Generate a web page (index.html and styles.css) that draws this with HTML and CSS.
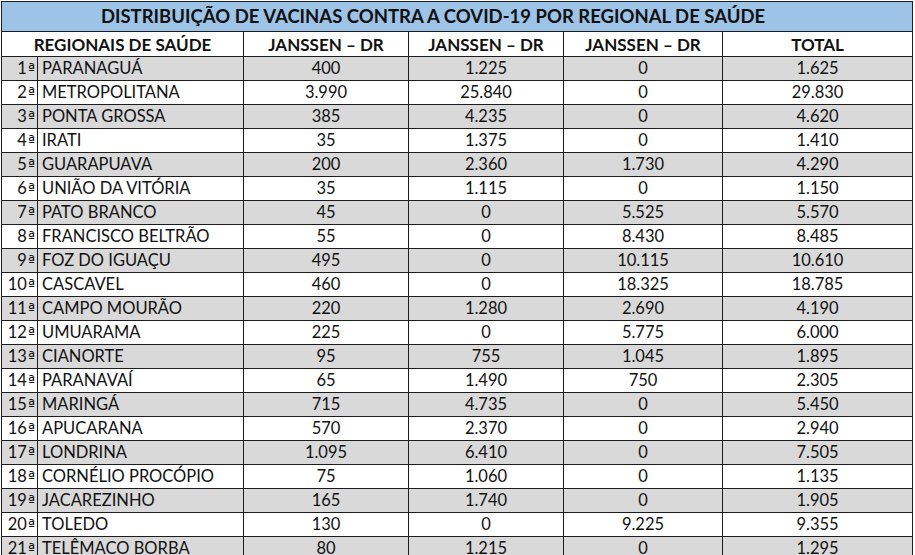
FILE: index.html
```html
<!DOCTYPE html>
<html lang="pt-BR">
<head>
<meta charset="utf-8">
<title>Distribuição de vacinas</title>
<link rel="stylesheet" href="styles.css">
</head>
<body>
<div class="wrap">
<table class="sheet">
<colgroup>
<col class="c-ord"><col class="c-name"><col class="c-j1"><col class="c-j2"><col class="c-j3"><col class="c-tot">
</colgroup>
<thead>
<tr class="title"><th colspan="6">DISTRIBUIÇÃO DE VACINAS CONTRA A COVID-19 POR REGIONAL DE SAÚDE</th></tr>
<tr class="head"><th colspan="2">REGIONAIS DE SAÚDE</th><th>JANSSEN – DR</th><th>JANSSEN – DR</th><th>JANSSEN – DR</th><th>TOTAL</th></tr>
</thead>
<tbody>
<tr class="odd"><td class="ord">1<span class="o">ª</span></td><td class="name">PARANAGUÁ</td><td>400</td><td>1.225</td><td>0</td><td>1.625</td></tr>
<tr><td class="ord">2<span class="o">ª</span></td><td class="name">METROPOLITANA</td><td>3.990</td><td>25.840</td><td>0</td><td>29.830</td></tr>
<tr class="odd"><td class="ord">3<span class="o">ª</span></td><td class="name">PONTA GROSSA</td><td>385</td><td>4.235</td><td>0</td><td>4.620</td></tr>
<tr><td class="ord">4<span class="o">ª</span></td><td class="name">IRATI</td><td>35</td><td>1.375</td><td>0</td><td>1.410</td></tr>
<tr class="odd"><td class="ord">5<span class="o">ª</span></td><td class="name">GUARAPUAVA</td><td>200</td><td>2.360</td><td>1.730</td><td>4.290</td></tr>
<tr><td class="ord">6<span class="o">ª</span></td><td class="name">UNIÃO DA VITÓRIA</td><td>35</td><td>1.115</td><td>0</td><td>1.150</td></tr>
<tr class="odd"><td class="ord">7<span class="o">ª</span></td><td class="name">PATO BRANCO</td><td>45</td><td>0</td><td>5.525</td><td>5.570</td></tr>
<tr><td class="ord">8<span class="o">ª</span></td><td class="name">FRANCISCO BELTRÃO</td><td>55</td><td>0</td><td>8.430</td><td>8.485</td></tr>
<tr class="odd"><td class="ord">9<span class="o">ª</span></td><td class="name">FOZ DO IGUAÇU</td><td>495</td><td>0</td><td>10.115</td><td>10.610</td></tr>
<tr><td class="ord">10<span class="o">ª</span></td><td class="name">CASCAVEL</td><td>460</td><td>0</td><td>18.325</td><td>18.785</td></tr>
<tr class="odd"><td class="ord">11<span class="o">ª</span></td><td class="name">CAMPO MOURÃO</td><td>220</td><td>1.280</td><td>2.690</td><td>4.190</td></tr>
<tr><td class="ord">12<span class="o">ª</span></td><td class="name">UMUARAMA</td><td>225</td><td>0</td><td>5.775</td><td>6.000</td></tr>
<tr class="odd"><td class="ord">13<span class="o">ª</span></td><td class="name">CIANORTE</td><td>95</td><td>755</td><td>1.045</td><td>1.895</td></tr>
<tr><td class="ord">14<span class="o">ª</span></td><td class="name">PARANAVAÍ</td><td>65</td><td>1.490</td><td>750</td><td>2.305</td></tr>
<tr class="odd"><td class="ord">15<span class="o">ª</span></td><td class="name">MARINGÁ</td><td>715</td><td>4.735</td><td>0</td><td>5.450</td></tr>
<tr><td class="ord">16<span class="o">ª</span></td><td class="name">APUCARANA</td><td>570</td><td>2.370</td><td>0</td><td>2.940</td></tr>
<tr class="odd"><td class="ord">17<span class="o">ª</span></td><td class="name">LONDRINA</td><td>1.095</td><td>6.410</td><td>0</td><td>7.505</td></tr>
<tr><td class="ord">18<span class="o">ª</span></td><td class="name">CORNÉLIO PROCÓPIO</td><td>75</td><td>1.060</td><td>0</td><td>1.135</td></tr>
<tr class="odd"><td class="ord">19<span class="o">ª</span></td><td class="name">JACAREZINHO</td><td>165</td><td>1.740</td><td>0</td><td>1.905</td></tr>
<tr><td class="ord">20<span class="o">ª</span></td><td class="name">TOLEDO</td><td>130</td><td>0</td><td>9.225</td><td>9.355</td></tr>
<tr class="odd"><td class="ord">21<span class="o">ª</span></td><td class="name">TELÊMACO BORBA</td><td>80</td><td>1.215</td><td>0</td><td>1.295</td></tr>
</tbody>
</table>
</div>
</body>
</html>
```
FILE: styles.css
```css
html, body {
  margin: 0;
  padding: 0;
  background: #ffffff;
}
.wrap {
  padding: 1px 0 0 1px;
}
.sheet {
  border-collapse: collapse;
  table-layout: fixed;
  width: 912px;
  font-family: Lato, "Open Sans", sans-serif;
  font-size: 16.5px;
  color: #111111;
}
.c-ord { width: 36px; }
.c-name { width: 206px; }
.c-j1 { width: 165px; }
.c-j2 { width: 155px; }
.c-j3 { width: 159px; }
.c-tot { width: 190px; }
.sheet th,
.sheet td {
  border: 1px solid #1c1c1c;
  padding: 0;
  text-align: center;
  white-space: nowrap;
  overflow: hidden;
  line-height: 1;
}
.title th {
  height: 29px;
  padding-right: 48px;
  background: #9dc3e6;
  font-size: 18.5px;
  font-weight: 700;
}
.head th {
  height: 24px;
  font-size: 17px;
  font-weight: 700;
}
.sheet tbody td {
  height: 23px;
}
.odd td {
  background: #d9d9d9;
}
.sheet td.ord {
  text-align: right;
  padding-right: 2px;
}
.o {
  font-family: "DejaVu Sans", sans-serif;
  font-size: 15px;
  margin-left: 1px;
}
.sheet td.name {
  text-align: left;
  padding-left: 4px;
}
```
